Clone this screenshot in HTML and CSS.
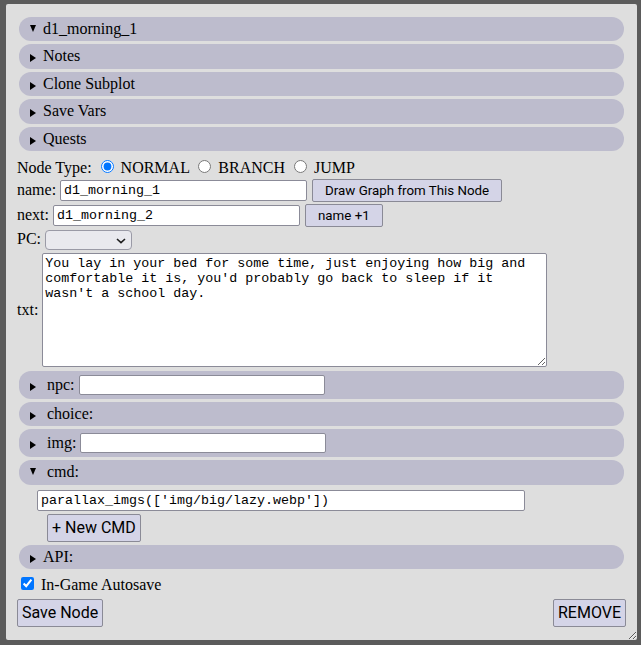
FILE: index.html
```html
<!DOCTYPE html>
<html>
<head>
<meta charset="utf-8">
<title>Node editor</title>
<link rel="stylesheet" href="styles.css">
</head>
<body>
<div class="panel">
  <details class="node" open>
    <summary class="bar">d1_morning_1</summary>
    <details class="sub"><summary class="bar">Notes</summary></details>
    <details class="sub"><summary class="bar">Clone Subplot</summary></details>
    <details class="sub"><summary class="bar">Save Vars</summary></details>
    <details class="sub"><summary class="bar">Quests</summary></details>

    <div class="row-type">Node Type: <input type="radio" name="nt" checked> NORMAL <input type="radio" name="nt"> BRANCH <input type="radio" name="nt"> JUMP</div>

    <div class="row row-name">
      <span class="lbl">name:</span>
      <input class="txt w247" type="text" value="d1_morning_1">
      <button class="btn btn-sm">Draw Graph from This Node</button>
    </div>
    <div class="row row-next">
      <span class="lbl">next:</span>
      <input class="txt w247" type="text" value="d1_morning_2">
      <button class="btn btn-sm">name +1</button>
    </div>
    <div class="row row-pc">
      <span class="lbl">PC:</span>
      <span class="select-wrap">
        <select class="pc"><option></option></select>
        <svg class="chev" width="10" height="6" viewBox="0 0 10 6"><path d="M1 1l4 3.6L9 1" fill="none" stroke="#1e1e1e" stroke-width="1.6"/></svg>
      </span>
    </div>
    <div class="row row-txt">
      <span class="lbl">txt:</span>
      <textarea class="txtarea">You lay in your bed for some time, just enjoying how big and comfortable it is, you'd probably go back to sleep if it wasn't a school day.</textarea>
    </div>

    <details class="sub"><summary class="bar bar-input">&nbsp;npc: <input class="txt w246" type="text"></summary></details>
    <details class="sub"><summary class="bar">&nbsp;choice:</summary></details>
    <details class="sub"><summary class="bar bar-input">&nbsp;img: <input class="txt w246" type="text"></summary></details>
    <details class="sub" open>
      <summary class="bar">&nbsp;cmd:</summary>
      <div class="cmd-body">
        <input class="txt cmd-input" type="text" value="parallax_imgs(['img/big/lazy.webp'])">
        <button class="btn btn-lg new-cmd">+ New CMD</button>
      </div>
    </details>
    <details class="sub"><summary class="bar">API:</summary></details>

    <label class="autosave"><input type="checkbox" checked> In-Game Autosave</label>
    <div class="footer">
      <button class="btn btn-lg">Save Node</button>
      <button class="btn btn-lg">REMOVE</button>
    </div>
  </details>
</div>
</body>
</html>
```

FILE: styles.css
```css
html, body {
  margin: 0;
  padding: 0;
}
body {
  background: #5b5b5b;
  font-family: "Liberation Serif", "Times New Roman", serif;
  font-size: 16px;
  line-height: 18.4px;
  color: #000;
  height: 645px;
}
.panel {
  box-sizing: border-box;
  width: 631px;
  height: 636px;
  margin: 4px 0 0 6px;
  padding: 10px 11px 0 11px;
  background: #dedede;
  border-radius: 2px;
  resize: both;
  overflow: hidden;
}
.bar {
  display: block;
  list-style: none;
  margin: 3px 2px 0 2px;
  padding: 3px 0 3px 11px;
  background: #bdbccd;
  border-radius: 12px;
  line-height: 18.4px;
  cursor: pointer;
}
.bar::-webkit-details-marker {
  display: none;
}
.bar::before {
  content: "";
  display: inline-block;
  width: 0;
  height: 0;
  margin-right: 7px;
  border-left: 6px solid #000;
  border-top: 4px solid transparent;
  border-bottom: 4px solid transparent;
  vertical-align: -1px;
}
details[open] > .bar::before {
  border-left: 3px solid transparent;
  border-right: 3px solid transparent;
  border-top: 7px solid #000;
  border-bottom: 0;
  margin-right: 7px;
  vertical-align: 2px;
}
.bar-input {
  box-sizing: border-box;
  height: 28px;
  padding: 4px 0 4px 11px;
  line-height: 20px;
}
.bar-input .txt {
  vertical-align: top;
  height: 20px;
}
.row-type {
  box-sizing: border-box;
  height: 27px;
  padding-top: 6px;
}
.row {
  display: flex;
  align-items: center;
  gap: 4px;
}
.row-name { height: 24px; }
.row-next { height: 24px; margin-top: 1px; }
.row-pc { height: 25px; }
.row-txt { height: 116px; }

.txt {
  box-sizing: border-box;
  height: 21px;
  margin: 0;
  padding: 0 3px;
  border: 1px solid #8b8b98;
  border-radius: 2px;
  background: #fff;
  font-family: "Liberation Mono", "Courier New", monospace;
  font-size: 13.333px;
  color: #000;
}
.w247 { width: 247px; }
.w246 { width: 246px; }

.btn {
  box-sizing: border-box;
  margin: 0;
  background: #d4d4e7;
  border: 1px solid #8a8a96;
  border-radius: 2px;
  font-family: Roboto, "Segoe UI", sans-serif;
  color: #000;
  cursor: pointer;
}
.btn-sm {
  height: 23px;
  padding: 0 12px;
  font-size: 13.333px;
  margin-left: 1px;
}
.btn-lg {
  height: 28px;
  padding: 0 4px;
  font-size: 16px;
}

.select-wrap {
  position: relative;
  display: inline-block;
  height: 20px;
}
.pc {
  appearance: none;
  -webkit-appearance: none;
  box-sizing: border-box;
  width: 87px;
  height: 20px;
  margin: 0;
  padding: 0 4px;
  border: 1px solid #9a9aa6;
  border-radius: 4px;
  background: #e9e9ee;
  display: block;
}
.chev {
  position: absolute;
  right: 6px;
  top: 8px;
  pointer-events: none;
}
.txtarea {
  box-sizing: border-box;
  width: 505px;
  height: 114px;
  margin: 0;
  padding: 2px;
  border: 1px solid #8b8b98;
  border-radius: 2px;
  background: #fff;
  font-family: "Liberation Mono", "Courier New", monospace;
  font-size: 13.333px;
  line-height: 15px;
  color: #000;
}
.cmd-body {
  padding: 5px 0 0 20px;
}
.cmd-input {
  display: block;
  width: 488px;
}
.new-cmd {
  display: block;
  margin: 3px 0 0 10px;
}
.autosave {
  display: block;
  margin-top: 5px;
}
.footer {
  display: flex;
  justify-content: space-between;
  margin-top: 4px;
}
```
